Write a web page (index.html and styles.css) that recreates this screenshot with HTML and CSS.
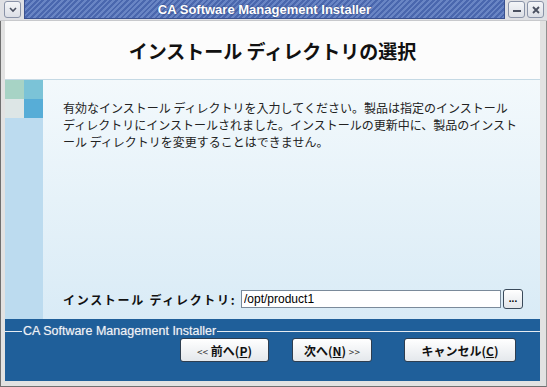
FILE: index.html
```html
<!DOCTYPE html>
<html lang="ja">
<head>
<meta charset="utf-8">
<title>CA Software Management Installer</title>
<link rel="stylesheet" href="styles.css">
</head>
<body>
<div class="win">
  <div class="titlebar">
    <div class="tbtn menu"><svg width="10" height="8" viewBox="0 0 10 8"><path d="M2 2 L5 5 L8 2" fill="none" stroke="#4a5060" stroke-width="1.6"/></svg></div>
    <div class="title">CA Software Management Installer</div>
    <div class="tbtn min"><svg width="10" height="8" viewBox="0 0 10 8"><rect x="1" y="4" width="8" height="2" fill="#4a5060"/></svg></div>
    <div class="tbtn close"><svg width="10" height="10" viewBox="0 0 10 10"><path d="M2 2 L8 8 M8 2 L2 8" stroke="#4a5060" stroke-width="1.8"/></svg></div>
  </div>
  <div class="frame">
    <div class="header"><h1>インストール ディレクトリの選択</h1></div>
    <div class="middle">
      <div class="side">
        <div class="squares">
          <div class="sq sq-a"></div><div class="sq sq-b"></div>
          <div class="sq sq-c"></div><div class="sq sq-d"></div>
        </div>
      </div>
      <div class="content">
        <p class="desc">有効なインストール ディレクトリを入力してください。製品は指定のインストール<br>ディレクトリにインストールされました。インストールの更新中に、製品のインスト<br>ール ディレクトリを変更することはできません。</p>
        <div class="field">
          <label class="label">インストール ディレクトリ:</label>
          <input class="path" type="text" value="/opt/product1">
          <button class="browse">...</button>
        </div>
      </div>
    </div>
    <div class="footer">
      <div class="legend"><span>CA Software Management Installer</span></div>
      <div class="buttons">
        <button class="btn btn-back"><span class="arr">&lt;&lt;</span> 前へ(<u>P</u>)</button>
        <button class="btn btn-next">次へ(<u>N</u>) <span class="arr">&gt;&gt;</span></button>
        <button class="btn btn-cancel">キャンセル(<u>C</u>)</button>
      </div>
    </div>
  </div>
</div>
</body>
</html>
```
FILE: styles.css
```css
* { box-sizing: border-box; }
html, body { margin: 0; padding: 0; }
body {
  width: 547px;
  height: 387px;
  overflow: hidden;
  background: #d8d8d8;
  font-family: "Noto Sans CJK JP", "Liberation Sans", sans-serif;
}
.win {
  width: 547px;
  height: 387px;
  display: flex;
  flex-direction: column;
  background: #dedfe2;
}
.titlebar {
  height: 21px;
  display: flex;
  align-items: flex-start;
  padding: 1px 3px 0 4px;
  background: #dfe0e4;
  border-bottom: 1px solid #c8c9cc;
}
.tbtn {
  width: 17px;
  height: 17px;
  border: 1px solid #8a93a8;
  border-radius: 3px;
  background: linear-gradient(#f4f5f8, #dcdfe6);
  display: flex;
  align-items: center;
  justify-content: center;
}
.title {
  flex: 1;
  height: 19px;
  margin: -1px 3px 0 3px;
  border: 1px solid #3a5190;
  border-top: none;
  background: repeating-linear-gradient(135deg, #4a67ae 0px, #4a67ae 2px, #6985c4 2px, #6985c4 4px);
  color: #fff;
  font-family: "Liberation Sans", sans-serif;
  font-weight: bold;
  font-size: 13px;
  line-height: 19px;
  text-align: center;
  text-shadow: 0 0 2px #2a3c70;
}
.tbtn.close { margin-left: 2px; }
.frame {
  flex: 1;
  display: flex;
  flex-direction: column;
  border-left: 1px solid #707070;
  padding-left: 4px;
  padding-right: 6px;
  padding-bottom: 5px;
  background: #e2e2e2;
  border-bottom: 1px solid #707070;
  border-right: 1px solid #909090;
}
.header {
  height: 59px;
  background: #fcfcfc;
  border-bottom: 1px solid #c5d9e4;
  display: flex;
  align-items: center;
  justify-content: center;
}
.header h1 {
  margin: 0;
  font-size: 19px;
  font-weight: bold;
  color: #111;
  padding-top: 1px;
}
.middle {
  height: 239px;
  display: flex;
}
.side {
  width: 38px;
  background: #bcdbef;
}
.squares {
  display: grid;
  grid-template-columns: 19px 19px;
  grid-template-rows: 19px 19px;
}
.sq-a { background: #a7d3c5; }
.sq-b { background: #7bc3d7; }
.sq-c { background: #dde6e6; }
.sq-d { background: #57add7; }
.content {
  flex: 1;
  display: flex;
  flex-direction: column;
  padding: 19px 0 10px 20px;
  background: linear-gradient(to bottom, #f3f9fc, #d9ebf6);
}
.desc {
  margin: 0;
  font-size: 12px;
  line-height: 17px;
  color: #222;
  white-space: nowrap;
}
.field {
  margin-top: auto;
  display: flex;
  align-items: center;
}
.label {
  width: 178px;
  font-size: 12px;
  font-weight: bold;
  color: #111;
  letter-spacing: 1.7px;
  white-space: nowrap;
}
.path {
  width: 260px;
  height: 18px;
  border: 1px solid #7a8a9a;
  background: #fff;
  font-family: "Liberation Sans", sans-serif;
  font-size: 12px;
  padding: 0 2px;
  color: #000;
  margin: 0;
}
.browse {
  width: 20px;
  height: 20px;
  margin: 0 0 0 2px;
  padding: 0;
  border: 1px solid #3a4a5a;
  border-radius: 3px;
  background: linear-gradient(#ffffff, #e2e6ea);
  font-size: 10px;
  font-weight: bold;
  line-height: 10px;
}
.footer {
  height: 62px;
  background: #1f5f9a;
  padding-top: 5px;
  display: flex;
  flex-direction: column;
}
.legend {
  height: 14px;
  display: flex;
  align-items: center;
  color: #eef2f8;
  font-family: "Liberation Sans", sans-serif;
  font-size: 12.5px;
  line-height: 14px;
  text-shadow: 0 0 1px #9ab;
}
.legend::before {
  content: "";
  width: 17px;
  height: 1px;
  background: #e6ecf2;
}
.legend::after {
  content: "";
  flex: 1;
  height: 1px;
  background: #e6ecf2;
}
.legend span { padding: 0 1px; }
.buttons {
  display: flex;
  padding-left: 175px;
}
.btn {
  height: 24px;
  margin: 0;
  padding: 0;
  border: 1px solid #2e3e50;
  border-radius: 3px;
  background: linear-gradient(#ffffff, #e4e8ec);
  font-family: "Noto Sans CJK JP", sans-serif;
  font-size: 12px;
  font-weight: bold;
  color: #111;
}
.btn .arr { font-weight: normal; font-size: 10px; color: #333; }
.btn-back { width: 89px; }
.btn-next { width: 80px; margin-left: 23px; }
.btn-cancel { width: 112px; margin-left: 32px; }
```
